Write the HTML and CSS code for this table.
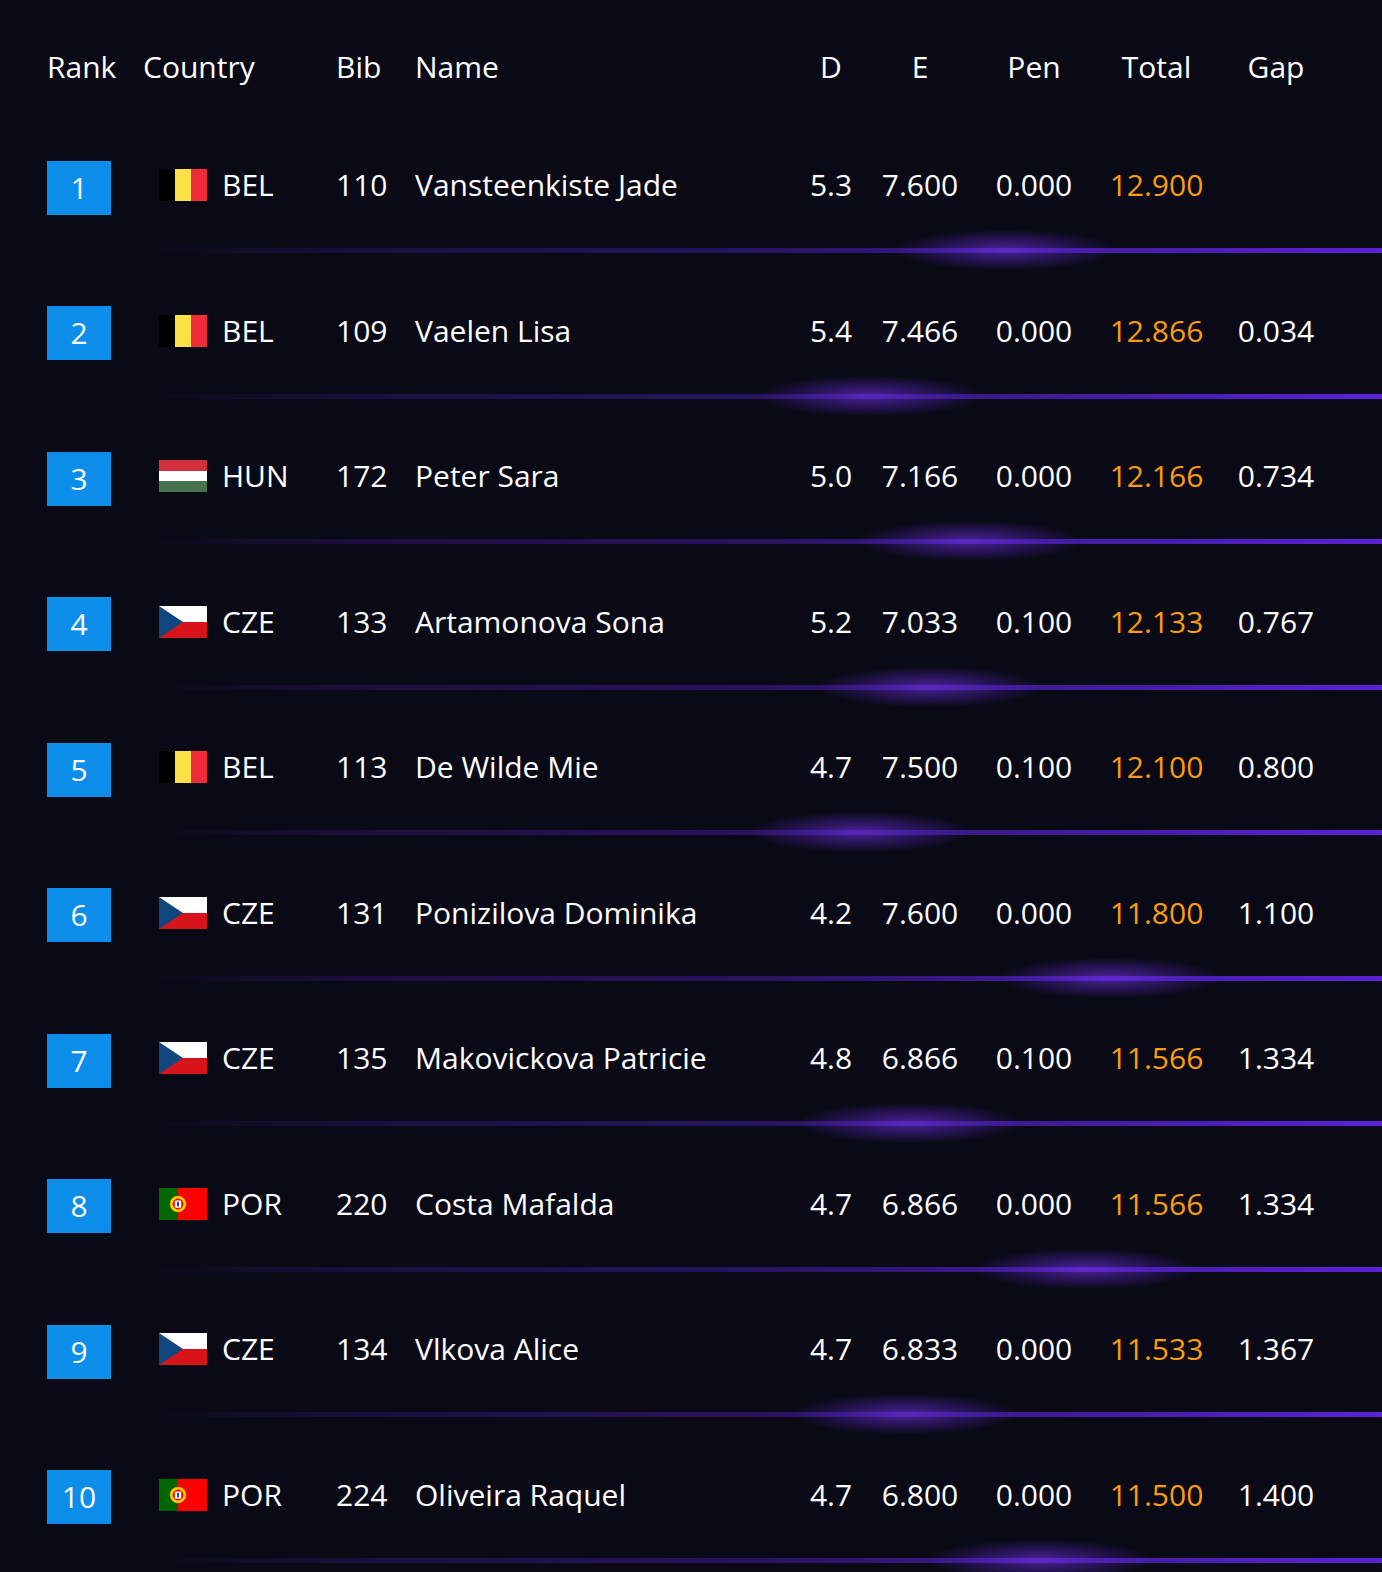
FILE: index.html
```html
<!DOCTYPE html>
<html lang="en">
<head>
<meta charset="utf-8">
<title>Results</title>
<link rel="stylesheet" href="styles.css">
</head>
<body>
<svg width="0" height="0" class="defs">
  <defs>
    <symbol id="flag-bel" viewBox="0 0 48 32">
      <rect x="0" y="0" width="16" height="32" fill="#000"/>
      <rect x="16" y="0" width="16" height="32" fill="#fde045"/>
      <rect x="32" y="0" width="16" height="32" fill="#ef2b3c"/>
    </symbol>
    <symbol id="flag-hun" viewBox="0 0 48 32">
      <rect x="0" y="0" width="48" height="11" fill="#d22f3e"/>
      <rect x="0" y="11" width="48" height="10" fill="#ffffff"/>
      <rect x="0" y="21" width="48" height="11" fill="#45724d"/>
    </symbol>
    <symbol id="flag-cze" viewBox="0 0 48 32">
      <rect x="0" y="0" width="48" height="16" fill="#ffffff"/>
      <rect x="0" y="16" width="48" height="16" fill="#d7141a"/>
      <polygon points="0,0 24,16 0,32" fill="#11457e"/>
    </symbol>
    <symbol id="flag-por" viewBox="0 0 48 32">
      <rect x="0" y="0" width="19" height="32" fill="#006600"/>
      <rect x="19" y="0" width="29" height="32" fill="#ff0000"/>
      <circle cx="19" cy="16" r="8" fill="#ffd200" stroke="#c8a000" stroke-width="0.6"/>
      <circle cx="19" cy="16" r="5.4" fill="#ff0000"/>
      <rect x="15.8" y="12.4" width="6.4" height="7.4" rx="1.2" fill="#ffffff"/>
      <rect x="18" y="13.8" width="2" height="4.6" fill="#1a46b8"/>
    </symbol>
  </defs>
</svg>
<div class="board">
  <div class="head cols">
    <div>Rank</div>
    <div>Country</div>
    <div>Bib</div>
    <div>Name</div>
    <div class="c">D</div>
    <div class="c">E</div>
    <div class="c">Pen</div>
    <div class="c">Total</div>
    <div class="c">Gap</div>
  </div>

  <div class="row">
    <div class="cols data">
      <div class="rank-cell"><span class="rank">1</span></div>
      <div class="country"><svg class="flag"><use href="#flag-bel"/></svg><span>BEL</span></div>
      <div>110</div>
      <div>Vansteenkiste Jade</div>
      <div class="c">5.3</div>
      <div class="c">7.600</div>
      <div class="c">0.000</div>
      <div class="c total">12.900</div>
      <div class="c"></div>
    </div>
    <div class="sep"><span class="glow" style="left:1005px"></span></div>
  </div>

  <div class="row">
    <div class="cols data">
      <div class="rank-cell"><span class="rank">2</span></div>
      <div class="country"><svg class="flag"><use href="#flag-bel"/></svg><span>BEL</span></div>
      <div>109</div>
      <div>Vaelen Lisa</div>
      <div class="c">5.4</div>
      <div class="c">7.466</div>
      <div class="c">0.000</div>
      <div class="c total">12.866</div>
      <div class="c">0.034</div>
    </div>
    <div class="sep"><span class="glow" style="left:870px"></span></div>
  </div>

  <div class="row">
    <div class="cols data">
      <div class="rank-cell"><span class="rank">3</span></div>
      <div class="country"><svg class="flag"><use href="#flag-hun"/></svg><span>HUN</span></div>
      <div>172</div>
      <div>Peter Sara</div>
      <div class="c">5.0</div>
      <div class="c">7.166</div>
      <div class="c">0.000</div>
      <div class="c total">12.166</div>
      <div class="c">0.734</div>
    </div>
    <div class="sep"><span class="glow" style="left:970px"></span></div>
  </div>

  <div class="row">
    <div class="cols data">
      <div class="rank-cell"><span class="rank">4</span></div>
      <div class="country"><svg class="flag"><use href="#flag-cze"/></svg><span>CZE</span></div>
      <div>133</div>
      <div>Artamonova Sona</div>
      <div class="c">5.2</div>
      <div class="c">7.033</div>
      <div class="c">0.100</div>
      <div class="c total">12.133</div>
      <div class="c">0.767</div>
    </div>
    <div class="sep"><span class="glow" style="left:930px"></span></div>
  </div>

  <div class="row">
    <div class="cols data">
      <div class="rank-cell"><span class="rank">5</span></div>
      <div class="country"><svg class="flag"><use href="#flag-bel"/></svg><span>BEL</span></div>
      <div>113</div>
      <div>De Wilde Mie</div>
      <div class="c">4.7</div>
      <div class="c">7.500</div>
      <div class="c">0.100</div>
      <div class="c total">12.100</div>
      <div class="c">0.800</div>
    </div>
    <div class="sep"><span class="glow" style="left:860px"></span></div>
  </div>

  <div class="row">
    <div class="cols data">
      <div class="rank-cell"><span class="rank">6</span></div>
      <div class="country"><svg class="flag"><use href="#flag-cze"/></svg><span>CZE</span></div>
      <div>131</div>
      <div>Ponizilova Dominika</div>
      <div class="c">4.2</div>
      <div class="c">7.600</div>
      <div class="c">0.000</div>
      <div class="c total">11.800</div>
      <div class="c">1.100</div>
    </div>
    <div class="sep"><span class="glow" style="left:1110px"></span></div>
  </div>

  <div class="row">
    <div class="cols data">
      <div class="rank-cell"><span class="rank">7</span></div>
      <div class="country"><svg class="flag"><use href="#flag-cze"/></svg><span>CZE</span></div>
      <div>135</div>
      <div>Makovickova Patricie</div>
      <div class="c">4.8</div>
      <div class="c">6.866</div>
      <div class="c">0.100</div>
      <div class="c total">11.566</div>
      <div class="c">1.334</div>
    </div>
    <div class="sep"><span class="glow" style="left:910px"></span></div>
  </div>

  <div class="row">
    <div class="cols data">
      <div class="rank-cell"><span class="rank">8</span></div>
      <div class="country"><svg class="flag"><use href="#flag-por"/></svg><span>POR</span></div>
      <div>220</div>
      <div>Costa Mafalda</div>
      <div class="c">4.7</div>
      <div class="c">6.866</div>
      <div class="c">0.000</div>
      <div class="c total">11.566</div>
      <div class="c">1.334</div>
    </div>
    <div class="sep"><span class="glow" style="left:1085px"></span></div>
  </div>

  <div class="row">
    <div class="cols data">
      <div class="rank-cell"><span class="rank">9</span></div>
      <div class="country"><svg class="flag"><use href="#flag-cze"/></svg><span>CZE</span></div>
      <div>134</div>
      <div>Vlkova Alice</div>
      <div class="c">4.7</div>
      <div class="c">6.833</div>
      <div class="c">0.000</div>
      <div class="c total">11.533</div>
      <div class="c">1.367</div>
    </div>
    <div class="sep"><span class="glow" style="left:905px"></span></div>
  </div>

  <div class="row">
    <div class="cols data">
      <div class="rank-cell"><span class="rank">10</span></div>
      <div class="country"><svg class="flag"><use href="#flag-por"/></svg><span>POR</span></div>
      <div>224</div>
      <div>Oliveira Raquel</div>
      <div class="c">4.7</div>
      <div class="c">6.800</div>
      <div class="c">0.000</div>
      <div class="c total">11.500</div>
      <div class="c">1.400</div>
    </div>
    <div class="sep"><span class="glow" style="left:1040px"></span></div>
  </div>
</div>
</body>
</html>
```

FILE: styles.css
```css
html, body {
  margin: 0;
  padding: 0;
  background: #0a0a17;
}
body {
  width: 1382px;
  height: 1572px;
  overflow: hidden;
  color: #ffffff;
  font-family: "Open Sans", "Noto Sans", sans-serif;
  font-size: 30px;
  line-height: 36px;
}
.defs {
  position: absolute;
  width: 0;
  height: 0;
}
.board {
  display: flex;
  flex-direction: column;
}
.cols {
  display: grid;
  grid-template-columns: 96px 193px 79px 373px 86px 92px 136px 109px 130px;
  grid-template-rows: 100%;
  align-items: center;
  padding-left: 47px;
}
.c {
  text-align: center;
}
.head {
  height: 36px;
  padding-top: 49px;
  padding-bottom: 22.5px;
}
.row {
  display: flex;
  flex-direction: column;
  height: 145.56px;
}
.data {
  margin-top: 47.5px;
  height: 60px;
}
.rank-cell {
  align-self: start;
  padding-top: 5.5px;
}
.rank {
  display: flex;
  align-items: center;
  justify-content: center;
  width: 64px;
  height: 54px;
  background: #0b8de9;
  color: #fff;
}
.country {
  display: flex;
  align-items: center;
  gap: 15px;
  padding-left: 16px;
}
.flag {
  width: 48px;
  height: 32px;
  flex: none;
}
.total {
  color: #fb9b10;
}
.sep {
  position: relative;
  margin-top: 33px;
  margin-left: 150px;
  height: 5px;
  background: linear-gradient(90deg,
    rgba(91, 34, 216, 0) 0%,
    rgba(91, 34, 216, 0.22) 18%,
    rgba(91, 34, 216, 0.38) 50%,
    rgba(91, 34, 216, 0.7) 75%,
    #5b22d8 100%);
}
.glow {
  position: absolute;
  top: -18px;
  width: 220px;
  height: 40px;
  margin-left: -260px;
  border-radius: 50%;
  background: radial-gradient(ellipse at center,
    rgba(115, 50, 235, 0.6) 0%,
    rgba(95, 40, 210, 0.32) 40%,
    rgba(80, 30, 190, 0) 72%);
  pointer-events: none;
}
```
